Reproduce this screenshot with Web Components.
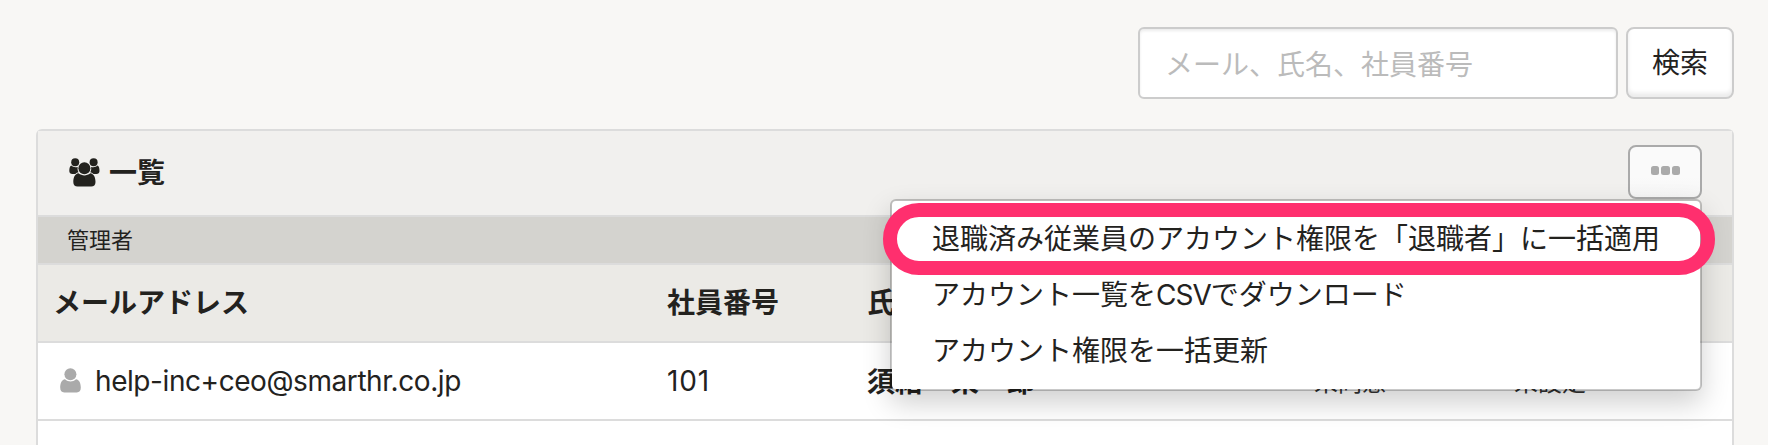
<!DOCTYPE html>
<html lang="ja">
<head>
<meta charset="utf-8">
<title>アカウント一覧</title>
<style>
html, body { margin: 0; height: 445px; overflow: hidden; background: #f8f7f5; }
body { font-family: "Inter", "Noto Sans CJK JP", sans-serif; font-size: 28px; line-height: 40px; color: #23221e; }
</style>
</head>
<body>
<account-page></account-page>
<script>
const define = (name, html) => customElements.define(name, class extends HTMLElement {
  constructor() {
    super();
    const t = document.createElement('template');
    t.innerHTML = html;
    this.attachShadow({ mode: 'open' }).append(t.content.cloneNode(true));
  }
});

define('search-bar', `
<style>
:host { display: flex; justify-content: flex-end; gap: 8px; height: 72px; }
.field, .btn { box-sizing: border-box; border: 2px solid #ccc; background: #fff; height: 72px; white-space: nowrap; }
.field { width: 480px; border-radius: 6px; padding: 16px 25px 12px; color: #bbb; box-shadow: inset 0 2px 3px rgba(0,0,0,.08); }
.btn { width: 108px; border-radius: 8px; padding: 14px 24px; box-shadow: inset 0 -4px 4px rgba(0,0,0,.08); }
</style>
<div class="field">メール、氏名、社員番号</div>
<div class="btn">検索</div>`);

define('users-icon', `
<style>:host { display: block; width: 31px; height: 29px; } svg { display: block; }</style>
<svg width="31" height="29" viewBox="0 0 31 29" fill="#23221e">
<circle cx="6.2" cy="4.2" r="4"/><circle cx="24.6" cy="4.2" r="4"/>
<path d="M2.2 7.6C.8 8.2.3 10.500.3 13c0 2 1.300 3 3 3h3c1.200-1 2.200-1.500 3.200-1.700C8.600 12.800 8.400 11 8.700 9 6.500 9.600 4 9.300 2.200 7.600z"/>
<path d="M28.600 7.600c1.400.6 1.900 2.900 1.900 5.400 0 2-1.300 3-3 3h-3c-1.200-1-2.200-1.500-3.200-1.700.9-1.500 1.100-3.300.8-5.300 2.200.6 4.700.3 6.500-1.400z"/>
<circle cx="15.400" cy="10.300" r="6"/>
<path d="M9.500 15.300C6 15.800 4.300 19.500 4.300 24c0 3 1.700 4.500 4.300 4.500h13.600c2.600 0 4.300-1.500 4.300-4.500 0-4.500-1.700-8.200-5.200-8.700-3.600 2.800-8.200 2.800-11.800 0z"/>
</svg>`);

define('user-icon', `
<style>:host { display: block; width: 21px; height: 25px; } svg { display: block; }</style>
<svg width="21" height="25" viewBox="0 0 21 25" fill="#aaa">
<circle cx="10.400" cy="6.200" r="6"/>
<path d="M5 11.200C1.600 11.600.2 15.500.2 19.600c0 3.300 1.500 4.900 4 4.900h12.600c2.500 0 4-1.600 4-4.900 0-4.100-1.400-8-4.800-8.400-3.300 2.900-7.700 2.900-11 0z"/>
</svg>`);

define('more-button', `
<style>
:host { display: flex; box-sizing: border-box; width: 74px; height: 54px; border: 2px solid #aaa; border-radius: 8px; background: linear-gradient(#fafafa 60%, #f6f6f6); gap: 2.400px; padding: 19px 0 0 20.600px; }
i { display: block; width: 8.300px; height: 8.700px; border-radius: 2.500px; background: #aaa; }
</style><i></i><i></i><i></i>`);

define('menu-item', `
<style>:host { display: block; height: 56px; line-height: 56px; white-space: nowrap; } ::slotted(span) { letter-spacing: -1px; }</style><slot></slot>`);

define('drop-menu', `
<style>
:host { display: block; box-sizing: border-box; width: 812px; height: 192px; border: 2px solid rgba(0,0,0,.21); border-radius: 6px; background: #fff; background-clip: padding-box; padding: 10px 40px; box-shadow: 0 12px 28px rgba(0,0,0,.19); }
.ring { position: absolute; left: -9px; top: 2px; box-sizing: border-box; width: 832px; height: 72px; border: 14px solid #ff2f6e; border-radius: 36px; }
</style>
<slot></slot><div class="ring"></div>`);

define('panel-header', `
<style>
:host { display: flex; height: 84px; box-sizing: border-box; background: #f1f0ee; padding: 14px 30px 0 31px; align-items: flex-start; position: relative; z-index: 1; }
users-icon { margin-top: 13px; }
b { margin: 8px auto 0 9px; }
drop-menu { position: absolute; right: 30px; top: 68px; }
</style>
<users-icon></users-icon><b>一覧</b><more-button></more-button>
<drop-menu>
<menu-item>退職済み従業員のアカウント権限を「退職者」に一括適用</menu-item>
<menu-item>アカウント一覧を<span>CSV</span>でダウンロード</menu-item>
<menu-item>アカウント権限を一括更新</menu-item>
</drop-menu>`);

define('group-row', `
<style>:host { display: block; height: 46px; line-height: 47px; font-size: 22px; background: #d4d3cf; padding-left: 29px; border: solid #dcdcdc; border-width: 2px 0; }</style><slot></slot>`);

define('table-row', `
<style>
:host { display: grid; grid-template-columns: 613px 200px 447px 200px 1fr; box-sizing: border-box; height: 78px; padding-left: 16px; align-items: center; border-bottom: 2px solid #dcdcdc; white-space: nowrap; }
:host([head]) { background: #ebeae6; font-weight: bold; }
:host([head]) ::slotted(:first-child) { margin-left: -1px; }
::slotted(.num) { letter-spacing: .9px; }
</style><slot></slot>`);

define('mail-cell', `
<style>:host { display: flex; align-items: center; padding-left: 6px; gap: 14px; } user-icon { margin-bottom: 2px; } span { letter-spacing: -.43px; }</style>
<user-icon></user-icon><span><slot></slot></span>`);

define('status-cell', `
<style>:host { display: block; font-size: 24px; color: #333; padding-top: 3px; }</style><slot></slot>`);

define('list-panel', `
<style>:host { display: block; box-sizing: border-box; height: 316px; border: 2px solid #dcdcdc; border-bottom: 0; border-radius: 6px 6px 0 0; background: #fff; }</style>
<slot></slot>`);

define('account-page', `
<style>:host { display: block; padding: 27px 34px 0 36px; } list-panel { margin-top: 30px; } b { padding-top: 1px; }</style>
<search-bar></search-bar>
<list-panel>
<panel-header></panel-header>
<group-row>管理者</group-row>
<table-row head><span>メールアドレス</span><span>社員番号</span><span>氏名</span></table-row>
<table-row><mail-cell>help-inc+ceo@smarthr.co.jp</mail-cell><span class="num">101</span><b>須給　栄一郎</b><status-cell>未同意</status-cell><status-cell>未設定</status-cell></table-row>
</list-panel>`);
</script>
</body>
</html>
